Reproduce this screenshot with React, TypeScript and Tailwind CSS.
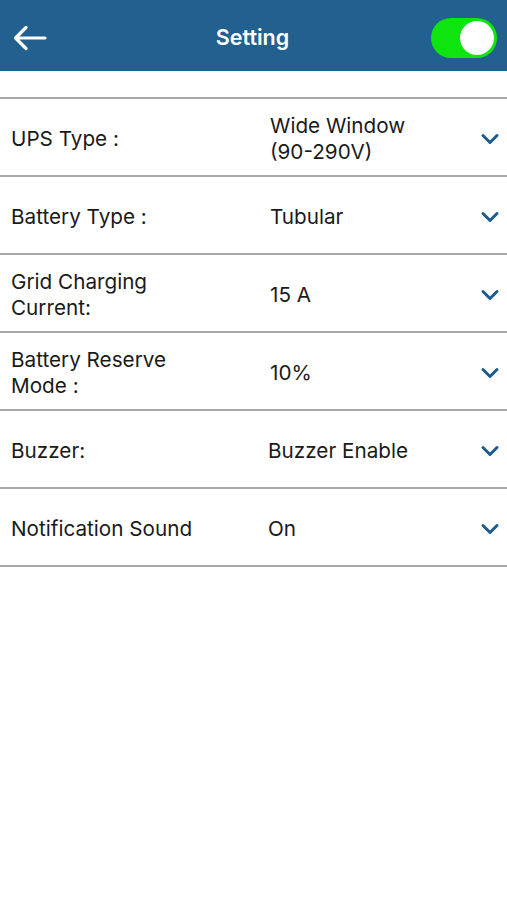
import React from "react";

const rows = [
  { label: ["UPS Type :"], value: ["Wide Window", "(90-290V)"] },
  { label: ["Battery Type :"], value: ["Tubular"] },
  { label: ["Grid Charging", "Current:"], value: ["15 A"] },
  { label: ["Battery Reserve", "Mode :"], value: ["10%"] },
  { label: ["Buzzer:"], value: ["Buzzer Enable"], shift: true },
  { label: ["Notification Sound"], value: ["On"], shift: true },
];

const Chevron = () => (
  <svg className="h-[14px] w-[20px]" viewBox="0 0 20 14" fill="none">
    <path d="M3 3.5l7 7 7-7" stroke="#1d5b8c" strokeWidth={3} strokeLinecap="round" strokeLinejoin="round" />
  </svg>
);

export default function App() {
  return (
    <div className="min-h-[900px] w-[507px] bg-white text-[#1a1a1a]" style={{ fontFamily: "Inter, 'Noto Sans', sans-serif" }}>
      {/* Header */}
      <div className="flex h-[71px] items-center justify-between bg-[#21608f] pl-[12px] pr-[10px] pt-[4px]">
        <svg className="h-[26px] w-[36px]" viewBox="0 0 36 26" fill="none">
          <path d="M33 13H4M14 2.5L3.5 13 14 23.5" stroke="white" strokeWidth={3.2} strokeLinecap="round" strokeLinejoin="round" />
        </svg>
        <span className="ml-[26px] text-[21.5px] font-semibold text-white">Setting</span>
        <div className="flex h-[40px] w-[66px] items-center justify-end rounded-full bg-[#0ee40e] pr-[3px]">
          <div className="h-[34px] w-[34px] rounded-full bg-white" />
        </div>
      </div>

      <div className="h-[26px]" />

      <div className="border-t-2 border-[#a8a8a8]">
        {rows.map((r, i) => (
          <div key={i} className="flex h-[78px] items-center border-b-2 border-[#a8a8a8] pl-[11px] pr-[7px] pt-[3px]">
            <div className="w-[259px] text-[20.7px] leading-[26px]">
              {r.label.map((l) => (
                <div key={l}>{l}</div>
              ))}
            </div>
            <div className={`flex-1 text-[20.7px] leading-[26px] ${r.shift ? "-ml-[2px]" : ""}`}>
              {r.value.map((v) => (
                <div key={v}>{v}</div>
              ))}
            </div>
            <Chevron />
          </div>
        ))}
      </div>
    </div>
  );
}
